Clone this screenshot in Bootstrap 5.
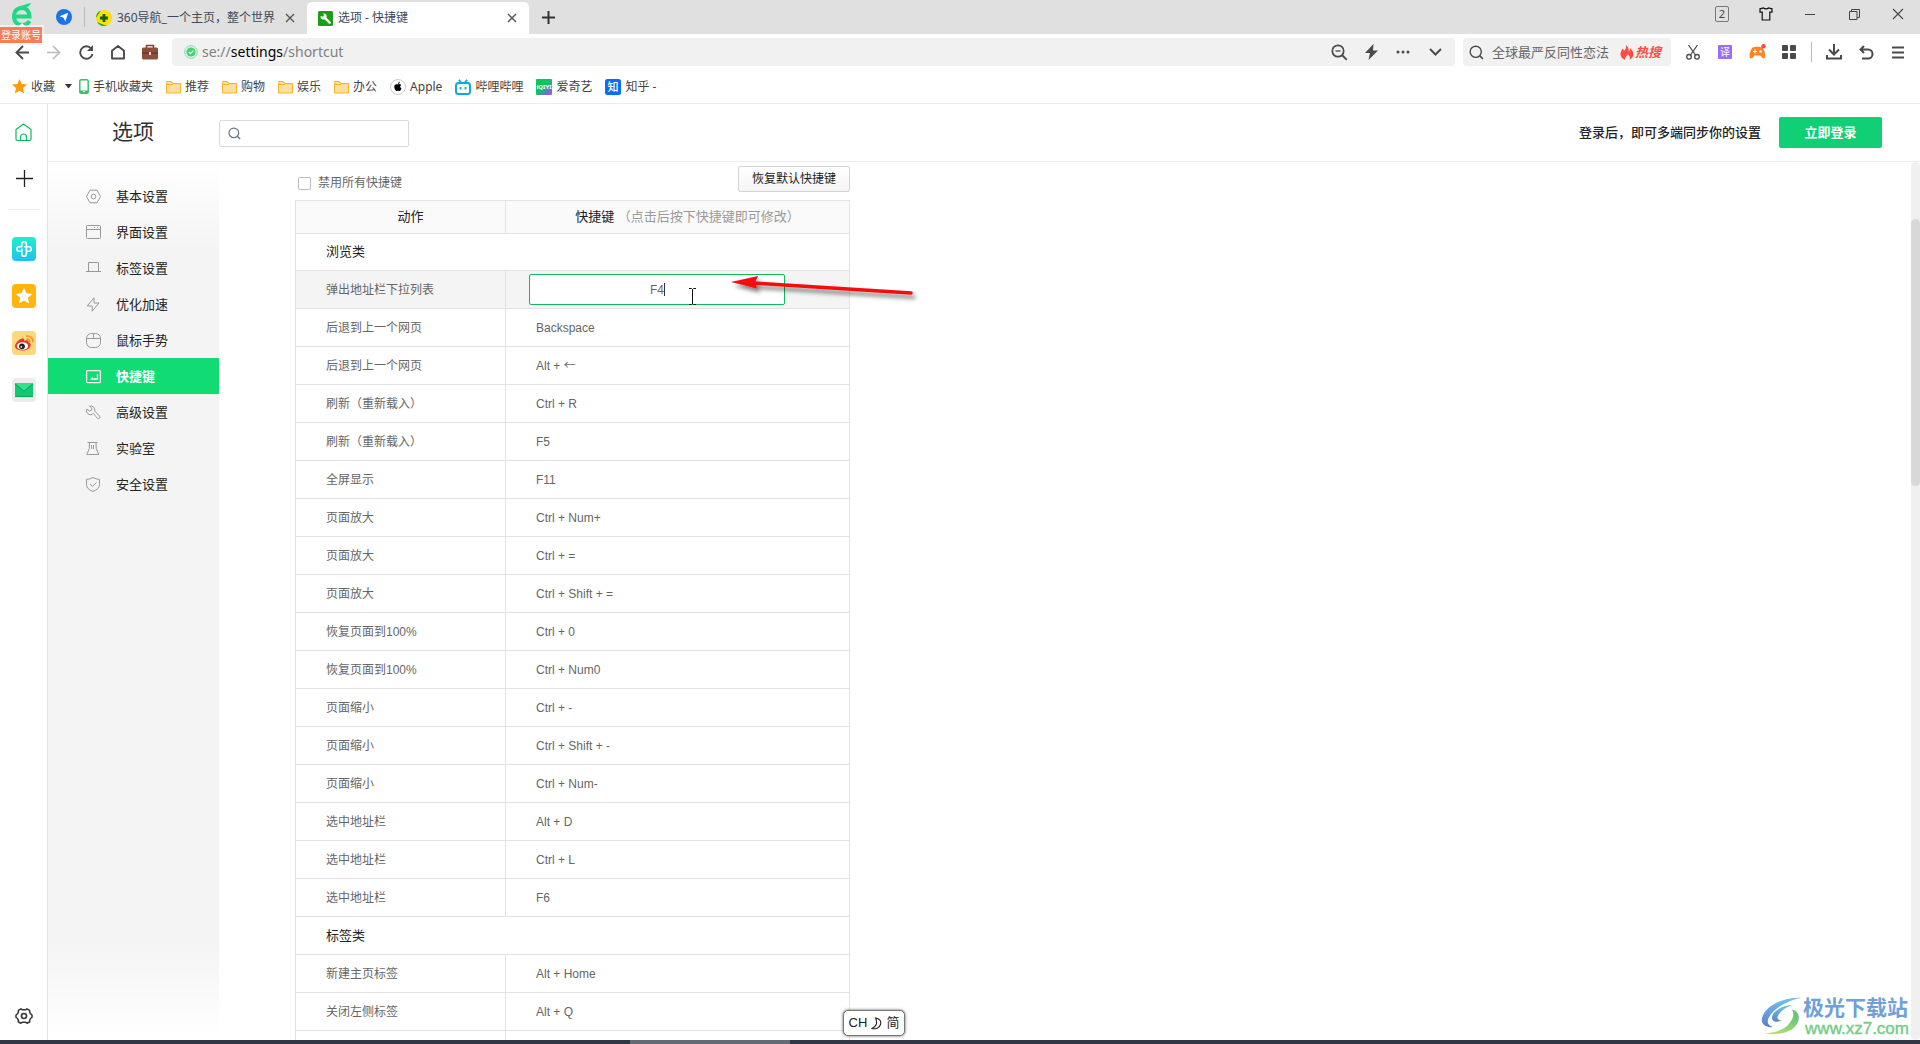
<!DOCTYPE html>
<html lang="zh-CN">
<head>
<meta charset="utf-8">
<meta name="viewport" content="width=device-width, initial-scale=1">
<title>选项 - 快捷键</title>
<link rel="stylesheet" href="https://cdn.jsdelivr.net/npm/bootstrap@5.3.0/dist/css/bootstrap.min.css">
<style>
body{font:12px/18px "Noto Sans","Noto Sans CJK SC",sans-serif;color:#444;background:#fff}
button{border:0;background:none;padding:0;color:inherit}
svg{display:block;flex:none}
a{color:inherit;text-decoration:none}
.ln{fill:none;stroke:currentColor}
/* title bar */
.titlebar{height:34px;background:#e0e0e0;color:#3b4a5c}
.logo-btn{width:44px;height:34px;padding-bottom:4px}
.logo-tip{left:0;top:27px;height:16px;padding:0 1px;font-size:10px;line-height:16px;color:#fff;background:#ff7a55;box-shadow:0 0 0 2px #fff8;z-index:3}
.logo-tip::before{content:"";position:absolute;left:18px;top:-4px;border:4px solid transparent;border-top:0;border-bottom-color:#fff}
.blue-btn{width:40px;height:34px}
.vline{width:1px;height:20px;background:#bbb}
.tab-item{width:222px;height:34px;padding:2px 9px 0 11px;gap:5px}
.tab-item .close-x{width:16px;height:16px;color:#555}
.tab-on{background:#fff;height:32px;margin-top:2px;padding-top:0;border-radius:5px 5px 0 0}
.newtab{width:38px;height:28px;color:#333}
.win-btn{width:44px;height:28px;color:#444}
.count-box{width:14px;height:16px;border:1px solid #777;border-radius:2px;font-size:11px;line-height:14px}
/* toolbar */
.toolbar{height:36px;padding:4px 6px 4px 6px;color:#4a4a4a}
.tool-btn{width:32px;height:28px}
.field{height:28px;background:#f1f1f1;border-radius:4px}
.addr{margin-left:6px;padding-left:12px}
.addr-text{font-size:14px;line-height:20px;color:#808080}
.find-box{width:208px;margin:0 6px 0 8px;padding:0 9px 0 6px}
.find-box input{font-size:13px;line-height:20px;width:124px;color:#666;background:none;border:0;padding:0;outline:0}
.find-box input::placeholder{color:#666}
.hot{font-size:13px;font-weight:700;font-style:italic;color:#ff4c43;margin-left:1px}
.yi{width:14px;height:14px;background:#9a6cff;color:#fff;font-size:10px;line-height:14px;border-radius:1px}
.sep-box{width:13px}
/* bookmarks */
.bookmarks{height:34px;padding:0 12px;gap:13px;border-bottom:1px solid #ebebeb}
.bookmarks a{gap:4px}
.caret-down{margin:0 -6px 0 -3px}
/* rail */
.rail{width:48px;border-right:1px solid #e2e2e2;color:#333;padding:16px 0 12px}
.rail-apps{gap:23px;padding-top:27px}
.rail hr{width:32px;margin:22px 0 0;border-color:#bbb}
.rail-add{margin:26px 0 0 1px}
/* page */
.page-head{height:58px;border-bottom:1px solid #ebebeb}
.page-title{width:171px;padding:0 0 3px 64px;font-size:21px;line-height:28px;color:#333;font-weight:400}
.search-box{width:190px;height:27px;border:1px solid #d9d9d9;border-radius:2px;padding:0 8px;margin-top:1px}
.search-box input{border:0;outline:0;width:150px}
.login-note{font-size:13px;color:#222;font-weight:500;margin-right:18px;padding-bottom:2px}
.login-btn{width:103px;height:31px;margin-right:38px;padding-bottom:2px;background:#10cf75;color:#fff;font-size:13px;font-weight:700;border-radius:2px}
.login-btn:hover{background:#0ebd6b;color:#fff}
.side{width:171px;padding-top:16px;background:linear-gradient(#fff 0,#f4f4f4 90px,#f4f4f4 calc(100% - 100px),#fff 100%)}
.side a{height:36px;padding-left:38px;gap:15px;font-size:13px;color:#222}
.side svg{color:#999}
.side .side-on{background:#11dc74;color:#fff;font-weight:700}
.side .side-on svg{color:#fff}
.main-col{padding-left:76px}
.keys-wrap{width:555px}
.top-line{height:38px;padding:4px 0 0 3px;font-family:"Liberation Sans","Noto Sans CJK SC",sans-serif;color:#666}
.top-line input{width:13px;height:13px;appearance:none;border:1px solid #bbb;border-radius:2px;background:#fff}
.top-line label{gap:7px}
.reset-btn{width:112px;height:26px;border:1px solid #d4d4d4;border-radius:2px;background:linear-gradient(#fff,#f5f5f5);color:#222}
.keys{width:555px;table-layout:fixed;border-collapse:collapse;border:1px solid #dadddf;font-family:"Liberation Sans","Noto Sans CJK SC",sans-serif;color:#666;margin:0}
.keys th,.keys td{border:1px solid #e3e3e3;padding:0 0 0 30px;height:38px;font-weight:400}
.keys thead th{height:33px;background:#fafafa;text-align:center;padding-left:20px;font-size:13px;color:#222}
.keys thead span{color:#999}
.keys .group th{height:38px;font-size:13px;color:#222;text-align:left}
.keys .first-group th{height:37px}
.keys .editing td{background:#f4f4f4}
.keys .editing td:last-child{padding-left:23px}
.arrow-key{font-family:"Noto Sans CJK SC",sans-serif;line-height:1}
.key-input{display:block;width:256px;height:31px;border:1px solid #12b85f;border-radius:2px;text-align:center;color:#666;outline:0;background:#fff;padding:0}
.text-caret{left:135px;top:9px;width:1px;height:13px;background:#333}
.pointer{left:200px;top:2px;z-index:2}
.ibeam{left:159px;top:14px;z-index:3}
.scroll-track{width:9px;background:#f0f0f0;border-radius:5px;padding-top:57px}
.scroll-thumb{height:267px;background:#d8d8d8;border-radius:5px}
.taskbar{height:4px;background:#2f3844;padding-left:630px}
.taskbar div{width:160px;height:4px;background:#646a74}
.ime{left:843px;bottom:8px;height:26px;width:62px;border:1px solid #777;border-radius:5px;background:#fff;box-shadow:0 0 3px #555;color:#222;font-size:13px;z-index:5}
.ime,.ime span{font-family:"Liberation Sans","Noto Sans CJK SC",sans-serif}
.wmark{right:11px;bottom:6px;z-index:4}
.wmark-name{font:700 21px/25px "Noto Sans CJK SC",sans-serif;color:#6fa0d8}
.wmark-url{font:500 17px/19px "Liberation Sans",sans-serif;color:#72cd85;-webkit-text-stroke:.4px #72cd85;padding-left:2px}
</style>
<script src="https://cdn.jsdelivr.net/npm/bootstrap@5.3.0/dist/js/bootstrap.bundle.min.js"></script>
</head>
<body>
<svg width="0" height="0" class="position-absolute">
  <defs>
    <symbol id="i-x" viewBox="0 0 10 10"><path class="ln" stroke-width="1.4" d="M1 1l8 8M9 1l-8 8"/></symbol>
    <symbol id="i-folder" viewBox="0 0 15 14"><path d="M.5 2.500v-1h5l1.500 2h7.500v9.500H.5z" fill="#ffdf9c" stroke="#f8b326"/><path d="M1 4.500h6" stroke="#f8b326" fill="none"/></symbol>
    <symbol id="i-search" viewBox="0 0 14 14"><circle class="ln" cx="6.300" cy="6.300" r="5.200" stroke-width="1.300"/><path class="ln" stroke-width="1.500" d="M10 10l3 3"/></symbol>
  </defs>
</svg>
<div class="d-flex flex-column vh-100 overflow-hidden position-relative">

<header class="titlebar d-flex align-items-center flex-shrink-0">
  <button class="logo-btn d-flex align-items-center justify-content-center" aria-label="登录账号">
    <svg width="22" height="24" viewBox="0 0 22 24"><path fill="none" stroke="#1ed985" stroke-width="4" d="M3 13.500h15.500C18 7 14.500 5 11 5 6.500 5 3 8 3 13.500S6.500 22 11 22c3 0 6-1 7.500-4"/><path fill="#1ed985" d="M2 9C4 3 12 2.500 15 1.200 17 .3 19 .5 20 0c-1 2.500-3 4-6 4.500C9 5 5 5.500 2 9z"/></svg>
  </button>
  <span class="logo-tip position-absolute">登录账号</span>
  <button class="blue-btn d-flex align-items-center justify-content-center" aria-label="发现">
    <svg width="16" height="16" viewBox="0 0 16 16"><circle cx="8" cy="8" r="8" fill="#1b73e8"/><path fill="#fff" d="M12.200 3.800L9.300 12.500 7.600 8.700 3.500 7.200z"/></svg>
  </button>
  <span class="vline"></span>
  <div class="tab-item d-flex align-items-center">
    <svg width="16" height="16" viewBox="0 0 16 16"><circle cx="8" cy="8" r="8" fill="#fbe00b"/><path fill="#2f9e28" d="M1 12A8 8 0 0 0 11 15.500C7 15 4 13 1 12zM0 8a8 8 0 0 1 5-7.400C3 3 2 5 0 8z"/><path stroke="#146010" stroke-width="2.800" d="M8 4v8M4 8h8"/></svg>
    <span>360导航_一个主页，整个世界</span>
    <button class="close-x ms-auto d-flex align-items-center justify-content-center" aria-label="关闭"><svg width="10" height="10"><use href="#i-x"/></svg></button>
  </div>
  <div class="tab-item tab-on d-flex align-items-center">
    <svg width="15" height="15" viewBox="0 0 15 15"><rect width="15" height="15" rx="1.500" fill="#1c9e14"/><path stroke="#fff" stroke-width="2.400" stroke-linecap="round" d="M6.500 6.500l5.200 5.200"/><path fill="#fff" d="M3 5l1.700.7L6 4.500 5.300 2.600A3 3 0 1 1 2.700 5z"/></svg>
    <span>选项 - 快捷键</span>
    <button class="close-x ms-auto d-flex align-items-center justify-content-center" aria-label="关闭"><svg width="10" height="10"><use href="#i-x"/></svg></button>
  </div>
  <button class="newtab d-flex align-items-center justify-content-center" aria-label="新建标签"><svg width="13" height="13" viewBox="0 0 13 13"><path class="ln" stroke-width="2" d="M6.500 0v13M0 6.500h13"/></svg></button>
  <div class="d-flex ms-auto align-self-start">
    <button class="win-btn d-flex align-items-center justify-content-center"><span class="count-box">2</span></button>
    <button class="win-btn d-flex align-items-center justify-content-center" aria-label="皮肤"><svg width="14" height="14" viewBox="0 0 14 14"><path fill="none" stroke="#111" stroke-width="1.200" d="M4.500 1c1 1.200 4 1.200 5 0l3.500.8v3.400h-2.200V13H3.200V5.200H1V1.800z"/></svg></button>
    <button class="win-btn d-flex align-items-center justify-content-center" aria-label="最小化"><svg width="10" height="10" viewBox="0 0 10 10"><path class="ln" d="M0 5.500h10"/></svg></button>
    <button class="win-btn d-flex align-items-center justify-content-center" aria-label="还原"><svg width="11" height="11" viewBox="0 0 11 11"><path class="ln" d="M.5 2.500h7.500v8H.5zM2.500 2.500v-2h8v8H8"/></svg></button>
    <button class="win-btn d-flex align-items-center justify-content-center" aria-label="关闭窗口"><svg width="12" height="12" viewBox="0 0 12 12"><path class="ln" stroke-width="1.100" d="M1 1l10 10M11 1L1 11"/></svg></button>
  </div>
</header>

<div class="toolbar d-flex align-items-center flex-shrink-0">
  <button class="tool-btn d-flex align-items-center justify-content-center" aria-label="后退"><svg width="14" height="15" viewBox="0 0 14 15"><path class="ln" stroke-width="1.900" d="M14 7.500H1.500M8 1L1.500 7.500 8 14"/></svg></button>
  <button class="tool-btn d-flex align-items-center justify-content-center" aria-label="前进"><svg width="14" height="15" viewBox="0 0 14 15"><path fill="none" stroke="#bbb" stroke-width="1.700" d="M0 7.500h12.500M6 1l6.500 6.500L6 14"/></svg></button>
  <button class="tool-btn d-flex align-items-center justify-content-center" aria-label="刷新"><svg width="15" height="15" viewBox="0 0 15 15"><path class="ln" stroke-width="1.900" d="M12.200 3.500A6.200 6.200 0 1 0 13.500 9"/><path fill="currentColor" d="M14 0v6H8z"/></svg></button>
  <button class="tool-btn d-flex align-items-center justify-content-center" aria-label="主页"><svg width="14" height="15" viewBox="0 0 14 15"><path class="ln" stroke-width="1.900" stroke-linejoin="round" d="M1 13.500V5.800L7 1l6 4.800v7.700z"/></svg></button>
  <button class="tool-btn d-flex align-items-center justify-content-center" aria-label="工具箱"><svg width="16" height="16" viewBox="0 0 16 16"><path fill="none" stroke="#7c4534" stroke-width="1.600" d="M4.500 4V1.500h7V4"/><rect y="3.500" width="16" height="12" rx="1.500" fill="#8b4f3b"/><path d="M0 8.500h16v1.200H0z" fill="#5f3325"/><rect x="7" y="8" width="2" height="3" fill="#f2d9a6"/></svg></button>
  <div class="field addr d-flex align-items-center flex-grow-1">
    <svg width="14" height="14" viewBox="0 0 14 14"><circle cx="7" cy="7" r="6.300" fill="none" stroke="#7edd9c"/><circle cx="7" cy="7" r="4.600" fill="#3fd273"/><path d="M4.800 7l1.700 1.700L9.400 5.600" fill="none" stroke="#fff" stroke-width="1.200"/></svg>
    <span class="addr-text ms-1">se://<span class="text-black">settings</span>/shortcut</span>
    <div class="d-flex ms-auto me-1">
      <button class="tool-btn d-flex align-items-center justify-content-center" aria-label="缩放"><svg width="17" height="17" viewBox="0 0 17 17"><circle class="ln" cx="7" cy="7" r="5.700" stroke-width="1.700"/><path class="ln" stroke-width="1.900" d="M11 11l4.800 4.800"/><path class="ln" stroke-width="1.300" d="M4.500 7h5"/></svg></button>
      <button class="tool-btn d-flex align-items-center justify-content-center" aria-label="加速"><svg width="13" height="16" viewBox="0 0 13 16"><path fill="currentColor" d="M8.500 0L0 9h5L3.500 16 13 6.500H8z"/></svg></button>
      <button class="tool-btn d-flex align-items-center justify-content-center" aria-label="更多"><svg width="14" height="4" viewBox="0 0 14 4"><g fill="currentColor"><circle cx="2" cy="2" r="1.500"/><circle cx="7" cy="2" r="1.500"/><circle cx="12" cy="2" r="1.500"/></g></svg></button>
      <button class="tool-btn d-flex align-items-center justify-content-center" aria-label="展开"><svg width="13" height="8" viewBox="0 0 13 8"><path class="ln" stroke-width="2" d="M1 1l5.500 5.500L12 1"/></svg></button>
    </div>
  </div>
  <div class="field find-box d-flex align-items-center">
    <svg width="15" height="15"><use href="#i-search"/></svg>
    <input class="ms-2 me-1" type="text" placeholder="全球最严反同性恋法" aria-label="搜索">
    <svg width="14" height="15" viewBox="0 0 14 15"><path fill="#ff4c43" d="M6 0c2.500 2.500 3 4 2.500 6.500C9.500 6 10.500 4.500 10 3c3 2.500 4 5.500 3 8-.6 1.700-1.800 3-3.500 3.700C10.500 12 9.500 10.500 7.500 9 7.500 11 5 11.500 5 14.700 1.500 13.500 0 10.500.700 7.500 1 6 2 5 2.500 3.500 3.500 4 3.800 5 4 6 5.500 4.500 6.500 2.500 6 0z"/></svg>
    <span class="hot">热搜</span>
  </div>
  <button class="tool-btn d-flex align-items-center justify-content-center" aria-label="截图"><svg width="14" height="16" viewBox="0 0 14 16"><g class="ln" stroke-width="1.300"><circle cx="3" cy="12.800" r="2.300"/><circle cx="11" cy="12.800" r="2.300"/><path d="M2.500 1l7 10M11.500 1l-7 10"/></g></svg></button>
  <button class="tool-btn d-flex align-items-center justify-content-center"><span class="yi">译</span></button>
  <button class="tool-btn d-flex align-items-center justify-content-center" aria-label="游戏"><svg width="17" height="16" viewBox="0 0 17 16"><path fill="#ff8326" d="M3.500 3.500C6 2.500 11 2.500 13.500 3.500 15.500 6 16.500 10 16 13c-.5 2.500-2.500 1.500-4.500-1.500h-6C3.500 14.500 1 15.500.6 13 .2 10 1.500 6 3.500 3.500z"/><path stroke="#fff" stroke-width="1.200" d="M4 7.500h4M6 5.500v4"/><circle cx="11.500" cy="7.500" r="1.200" fill="#fff"/><circle cx="14.500" cy="2.200" r="2.200" fill="#ff4646"/></svg></button>
  <button class="tool-btn d-flex align-items-center justify-content-center" aria-label="扩展"><svg width="14" height="14" viewBox="0 0 14 14" fill="currentColor"><rect width="6" height="6" rx="1"/><rect x="8" width="6" height="6" rx="1"/><rect y="8" width="6" height="6" rx="1"/><rect x="8" y="8" width="6" height="6" rx="1"/></svg></button>
  <span class="sep-box d-flex justify-content-center"><span class="vline"></span></span>
  <button class="tool-btn d-flex align-items-center justify-content-center" aria-label="下载"><svg width="16" height="16" viewBox="0 0 16 16"><path class="ln" stroke-width="2" d="M8 0v10M3 5.500l5 5 5-5M1 11v3.500h14V11"/></svg></button>
  <button class="tool-btn d-flex align-items-center justify-content-center" aria-label="恢复"><svg width="15" height="15" viewBox="0 0 15 15"><path class="ln" stroke-width="2" d="M5 1L1.500 4.500 5 8M2 4.500h7a4.500 4.500 0 0 1 0 9H3"/></svg></button>
  <button class="tool-btn d-flex align-items-center justify-content-center" aria-label="菜单"><svg width="12" height="13" viewBox="0 0 12 13"><path class="ln" stroke-width="2" d="M0 1.500h12M0 6.500h12M0 11.500h12"/></svg></button>
</div>

<nav class="bookmarks d-flex align-items-center flex-shrink-0">
  <a href="#" class="d-flex align-items-center"><svg width="15" height="15" viewBox="0 0 15 15"><path fill="#ff9a0b" d="M7.500 0l2.200 5 5.300.5-4 3.600 1.200 5.400-4.700-2.800-4.700 2.800L4 9.100 0 5.500 5.300 5z"/></svg>收藏</a>
  <svg class="caret-down" width="7" height="5" viewBox="0 0 7 5"><path fill="#333" d="M0 0h7L3.500 4.500z"/></svg>
  <a href="#" class="d-flex align-items-center"><svg width="10" height="15" viewBox="0 0 10 15"><rect x=".8" y=".8" width="8.400" height="13.400" rx="1.300" fill="#fff" stroke="#3dbd6c" stroke-width="1.500"/><path d="M1 11.500h8V14H1z" fill="#3dbd6c"/><path d="M4 12.700h2" stroke="#fff"/></svg>手机收藏夹</a>
  <a href="#" class="d-flex align-items-center"><svg width="15" height="14"><use href="#i-folder"/></svg>推荐</a>
  <a href="#" class="d-flex align-items-center"><svg width="15" height="14"><use href="#i-folder"/></svg>购物</a>
  <a href="#" class="d-flex align-items-center"><svg width="15" height="14"><use href="#i-folder"/></svg>娱乐</a>
  <a href="#" class="d-flex align-items-center"><svg width="15" height="14"><use href="#i-folder"/></svg>办公</a>
  <a href="#" class="d-flex align-items-center"><svg width="16" height="16" viewBox="0 0 16 16"><circle cx="8" cy="8" r="7.500" fill="#fff" stroke="#ccc"/><path d="M8 5.500c1-.8 2.500-.6 3.200.4-1.400 1-1.200 2.800.3 3.500-.7 1.800-1.700 3-2.600 2.600-.7-.3-1.100-.3-1.800 0-1.500.5-3.500-3.500-2.600-5.500C5.200 5.200 6.700 4.900 8 5.500zM8 5c0-1.300.8-2.100 1.800-2.200C9.800 4 9 4.900 8 5z"/></svg>Apple</a>
  <a href="#" class="d-flex align-items-center"><svg width="16" height="16" viewBox="0 0 16 16"><rect x="1" y="4" width="14" height="11" rx="2.500" fill="none" stroke="#12a7dd" stroke-width="2"/><path d="M4 .8L6 3.500M12 .8L10 3.500M5.500 8v2.500M10.500 8v2.500" stroke="#12a7dd" stroke-width="1.800"/></svg>哔哩哔哩</a>
  <a href="#" class="d-flex align-items-center"><svg width="16" height="16" viewBox="0 0 16 16"><defs><linearGradient id="g-qi" x2="1" y2="1"><stop offset=".45" stop-color="#0cc65c"/><stop offset=".75" stop-color="#5a7bd0"/><stop offset="1" stop-color="#e03cf0"/></linearGradient></defs><rect width="16" height="16" rx="1" fill="url(#g-qi)"/><text x="8" y="10.300" font-size="6" font-weight="700" text-anchor="middle" fill="#fff">iQIYI</text></svg>爱奇艺</a>
  <a href="#" class="d-flex align-items-center"><svg width="16" height="16" viewBox="0 0 16 16"><rect width="16" height="16" rx="2.500" fill="#0a6cff"/><text x="8" y="12" font-size="11" font-weight="500" text-anchor="middle" fill="#fff">知</text></svg>知乎 -</a>
</nav>

<div class="d-flex flex-grow-1 overflow-hidden">
  <aside class="rail d-flex flex-column align-items-center flex-shrink-0">
    <a href="#" aria-label="首页"><svg width="17" height="24" viewBox="0 0 17 24"><path fill="none" stroke="#12b85f" stroke-width="1.200" stroke-linejoin="round" d="M1 9.500L8.500 4 16 9.500V19q0 1.500-1.500 1.500h-12Q1 20.500 1 19zM5.500 20.500V17a3 3 0 0 1 6 0v3.500"/></svg></a>
    <button class="rail-add" aria-label="添加"><svg width="17" height="17" viewBox="0 0 17 17"><path d="M8.500 0v17M0 8.500h17" stroke="#222" stroke-width="1.300"/></svg></button>
    <hr>
    <div class="rail-apps d-flex flex-column">
      <a href="#" aria-label="健康"><svg width="24" height="24" viewBox="0 0 24 24"><defs><linearGradient id="g-a" x2="0" y2="1"><stop stop-color="#1cf0cc"/><stop offset="1" stop-color="#1ec3ec"/></linearGradient></defs><rect width="24" height="24" rx="4" fill="url(#g-a)"/><path fill="none" stroke="#fff" stroke-width="1.600" stroke-linejoin="round" d="M9.800 14.200H7.200a2.300 2.300 0 0 1 0-4.600h2.600V7a2.300 2.300 0 0 1 4.600 0v7.200M12 9.700h5a2.300 2.300 0 0 1 0 4.600h-2.600V17a2.300 2.300 0 0 1-4.600 0v-5.500"/></svg></a>
      <a href="#" aria-label="收藏夹"><svg width="24" height="24" viewBox="0 0 24 24"><rect width="24" height="24" rx="4" fill="#ffb50e"/><path fill="#fff" d="M12 4l2.400 5.300 5.800.6-4.300 3.900 1.200 5.700L12 16.600l-5.100 2.900 1.200-5.700-4.300-3.900 5.800-.6z"/></svg></a>
      <a href="#" aria-label="微博"><svg width="24" height="24" viewBox="0 0 24 24"><rect width="24" height="24" rx="4" fill="#ffd77e"/><path fill="#e9362a" d="M3 15c0-3 5-8 8-7.500 1.500.2 1.300 1.500 1 2.300 2-.8 5-.8 4.500 1.500 2 .5 2.500 2 2 3.700-1 3-5 4.800-9 4.500S3 17.500 3 15z"/><ellipse cx="10.500" cy="15" rx="5.600" ry="3.800" fill="#fff"/><circle cx="10" cy="15.300" r="2.900" fill="#222"/><circle cx="9.300" cy="15.800" r=".9" fill="#fff"/><path fill="none" stroke="#f7931e" stroke-width="1.700" d="M14 5.200c4-1 7.500 2 6.800 6M14.500 8.200c2-.4 3.700 1 3.300 3"/></svg></a>
      <a href="#" aria-label="邮箱"><svg width="24" height="24" viewBox="0 0 24 24"><rect width="24" height="24" rx="4" fill="#ececec"/><rect x="3" y="5" width="18" height="14" fill="#13c873"/><path fill="#35e08c" d="M3 5h18l-9 8z"/><path fill="none" stroke="#0b9a56" stroke-width=".8" d="M3 6l9 7 9-7M3 18.600h18"/></svg></a>
    </div>
    <button class="mt-auto" aria-label="设置"><svg width="18" height="24" viewBox="0 0 18 24"><path class="ln" stroke-width="1.500" stroke-linejoin="round" d="M6 4.800l1.500 1h3l1.500-1 2.600 1.500.1 2L16 10.200l1 .8v2.500l-1.500 1-.8 1.700-.1 1.800L12 19.200l-1.500-1h-3l-1.500 1L3.400 18l-.1-1.900L2.500 14.500 1 13.500V11l1.400-1 .9-1.700.1-2z"/><circle class="ln" cx="9" cy="12" r="2.500" stroke-width="1.600"/></svg></button>
  </aside>

  <div class="d-flex flex-column flex-grow-1">
    <div class="page-head d-flex align-items-center flex-shrink-0">
      <h1 class="page-title mb-0">选项</h1>
      <label class="search-box d-flex align-items-center"><svg width="13" height="13" class="text-secondary me-2"><use href="#i-search"/></svg><input type="text" aria-label="搜索设置"></label>
      <span class="login-note ms-auto">登录后，即可多端同步你的设置</span>
      <button class="login-btn">立即登录</button>
    </div>
    <div class="d-flex flex-grow-1 overflow-hidden">
      <nav class="side flex-shrink-0">
        <a href="#" class="d-flex align-items-center"><svg width="15" height="15" viewBox="0 0 15 15"><path class="ln" d="M4 1.200h7l3.500 6.300-3.500 6.300H4L.5 7.500z" stroke-linejoin="round"/><circle class="ln" cx="7.500" cy="7.500" r="2.300"/></svg>基本设置</a>
        <a href="#" class="d-flex align-items-center"><svg width="15" height="15" viewBox="0 0 15 15"><rect class="ln" x=".5" y=".5" width="14" height="13" rx="1"/><path class="ln" d="M.5 4.500h14M8 2.500h1M11 2.500h1"/></svg>界面设置</a>
        <a href="#" class="d-flex align-items-center"><svg width="15" height="15" viewBox="0 0 15 15"><path class="ln" d="M0 10.500h3.500M11.500 10.500H15M2.500 10.500V1.500h10v9M3 10.500h9"/></svg>标签设置</a>
        <a href="#" class="d-flex align-items-center"><svg width="15" height="15" viewBox="0 0 15 15"><path class="ln" stroke-linejoin="round" d="M8 .8L1.200 9h5v5.200L13 6H8z"/></svg>优化加速</a>
        <a href="#" class="d-flex align-items-center"><svg width="15" height="15" viewBox="0 0 15 15"><rect class="ln" x=".5" y=".5" width="14" height="14" rx="5"/><path class="ln" d="M.5 5.500h14M7.500.5v5"/></svg>鼠标手势</a>
        <a href="#" class="side-on d-flex align-items-center"><svg width="15" height="15" viewBox="0 0 15 15"><rect class="ln" x=".6" y="1.600" width="13.800" height="12" rx="1" stroke-width="1.200"/><path class="ln" d="M11.500 5v5h-6" stroke-width="1.300"/><path fill="currentColor" d="M4 10l3-2v3z"/></svg>快捷键</a>
        <a href="#" class="d-flex align-items-center"><svg width="15" height="15" viewBox="0 0 15 15"><path class="ln" stroke-linejoin="round" d="M3.500 1.200A4 4 0 0 1 8.700 6l5 5.200q.8 1-.2 2t-2 .2L7.300 8.500A4 4 0 0 1 .8 4L3.600 6 5.800 5 5.600 2.900z"/></svg>高级设置</a>
        <a href="#" class="d-flex align-items-center"><svg width="15" height="15" viewBox="0 0 15 15"><path class="ln" stroke-linejoin="round" d="M1.500 1.500h10M3.500 1.500q1 6-2.700 12h12q-3.800-6-2.800-12M5.500 4v4M7.500 4v4"/></svg>实验室</a>
        <a href="#" class="d-flex align-items-center"><svg width="15" height="15" viewBox="0 0 15 15"><path class="ln" stroke-linejoin="round" d="M7 .5q3 1.800 6.500 1.900v5q0 4.800-6.500 7.100Q.5 12.200.5 7.400v-5Q4 2.300 7 .5zM4 7l2.500 2.500L10.500 5.500"/></svg>安全设置</a>
      </nav>
      <main class="main-col flex-grow-1 overflow-hidden">
        <div class="keys-wrap">
          <div class="top-line d-flex justify-content-between">
            <label class="d-flex align-items-center"><input type="checkbox">禁用所有快捷键</label>
            <button class="reset-btn">恢复默认快捷键</button>
          </div>
          <table class="keys">
            <colgroup><col width="210"><col></colgroup>
            <thead><tr><th>动作</th><th>快捷键 <span>（点击后按下快捷键即可修改）</span></th></tr></thead>
            <tbody>
              <tr class="group first-group"><th colspan="2">浏览类</th></tr>
              <tr class="editing"><td>弹出地址栏下拉列表</td><td><div class="position-relative"><input class="key-input" type="text" value="F4" aria-label="快捷键"><span class="text-caret position-absolute"></span>
                <svg class="pointer position-absolute" width="192" height="30" viewBox="0 0 192 30"><defs><filter id="sh" x="-10%" y="-50%" width="120%" height="250%"><feDropShadow dx="3" dy="4" stdDeviation="2" flood-opacity=".5"/></filter></defs><g filter="url(#sh)"><path stroke="#f30b0b" stroke-width="3.500" stroke-linecap="round" d="M24 7l158 10"/><path fill="#f30b0b" d="M2 6L29 0l-3 6.500 2 6z"/></g></svg>
                <svg class="ibeam position-absolute" width="9" height="17" viewBox="0 0 9 17"><path fill="none" stroke="#111" d="M1 .5h2.500l1 1 1-1H8M4.500 1v15M1 16.500h2.500l1-1 1 1H8"/></svg></div></td></tr>
              <tr><td>后退到上一个网页</td><td>Backspace</td></tr>
              <tr><td>后退到上一个网页</td><td>Alt + <span class="arrow-key">←</span></td></tr>
              <tr><td>刷新（重新载入）</td><td>Ctrl + R</td></tr>
              <tr><td>刷新（重新载入）</td><td>F5</td></tr>
              <tr><td>全屏显示</td><td>F11</td></tr>
              <tr><td>页面放大</td><td>Ctrl + Num+</td></tr>
              <tr><td>页面放大</td><td>Ctrl + =</td></tr>
              <tr><td>页面放大</td><td>Ctrl + Shift + =</td></tr>
              <tr><td>恢复页面到100%</td><td>Ctrl + 0</td></tr>
              <tr><td>恢复页面到100%</td><td>Ctrl + Num0</td></tr>
              <tr><td>页面缩小</td><td>Ctrl + -</td></tr>
              <tr><td>页面缩小</td><td>Ctrl + Shift + -</td></tr>
              <tr><td>页面缩小</td><td>Ctrl + Num-</td></tr>
              <tr><td>选中地址栏</td><td>Alt + D</td></tr>
              <tr><td>选中地址栏</td><td>Ctrl + L</td></tr>
              <tr><td>选中地址栏</td><td>F6</td></tr>
              <tr class="group"><th colspan="2">标签类</th></tr>
              <tr><td>新建主页标签</td><td>Alt + Home</td></tr>
              <tr><td>关闭左侧标签</td><td>Alt + Q</td></tr>
              <tr><td></td><td></td></tr>
            </tbody>
          </table>
        </div>
      </main>
      <div class="scroll-track flex-shrink-0"><div class="scroll-thumb"></div></div>
    </div>
  </div>
</div>
<div class="taskbar flex-shrink-0"><div></div></div>

<div class="ime position-absolute d-flex align-items-center justify-content-center gap-1"><span>CH</span><svg width="11" height="13" viewBox="0 0 11 13"><path class="ln" stroke-width="1.100" d="M4.500 1C8.500 1.500 10.500 4 9.500 7.500S4.500 12.500 1 11.500C5 10 7 6 4.500 1z"/></svg><span>简</span></div>
<div class="wmark position-absolute d-flex align-items-center">
  <svg width="42" height="40" viewBox="0 0 46 42"><defs><linearGradient id="g-b" x2="0" y2="1"><stop stop-color="#6fc3ee"/><stop offset="1" stop-color="#5b7fcb"/></linearGradient><linearGradient id="g-g" x1="1" x2="0" y2="1"><stop stop-color="#4fc07d"/><stop offset="1" stop-color="#cfe36d"/></linearGradient></defs><path fill="url(#g-b)" d="M44 1C28 0 4 8 1 24c-1 7 5 10 12 9-6-2-7-6-4-11C14 12 30 4 44 1z"/><path fill="url(#g-b)" d="M35 9C22 9 12 17 12 23c0 5 6 5 11 3-5 0-6-3-4-6 3-5 9-9 16-11z"/><path fill="url(#g-g)" d="M34 14c11 3 9 16-1 22-9 5-20 6-29 4 12-1 22-4 27-11 4-5 6-10 3-15z"/></svg>
  <div><div class="wmark-name">极光下载站</div><div class="wmark-url">www.xz7.com</div></div>
</div>
</div>
</body>
</html>
